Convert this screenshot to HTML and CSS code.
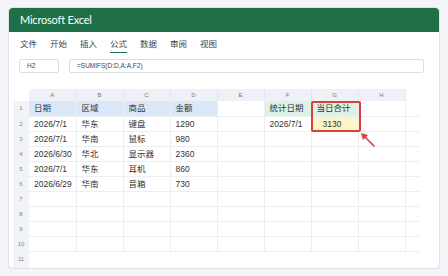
FILE: index.html
```html
<!DOCTYPE html>
<html lang="zh">
<head>
<meta charset="utf-8">
<link rel="stylesheet" href="styles.css">
</head>
<body>
<div class="card">
  <div class="titlebar">Microsoft Excel</div>
  <div class="tabs">
    <span class="tab">文件</span>
    <span class="tab">开始</span>
    <span class="tab">插入</span>
    <span class="tab active">公式</span>
    <span class="tab">数据</span>
    <span class="tab">审阅</span>
    <span class="tab">视图</span>
  </div>
  <div class="formulabar">
    <div class="namebox">H2</div>
    <div class="fx">=SUMIFS(D:D,A:A,F2)</div>
  </div>
  <div class="gridwrap">
    <table class="grid">
      <colgroup>
        <col class="c-rh"><col class="c"><col class="c"><col class="c"><col class="c"><col class="c"><col class="c"><col class="c"><col class="c"><col class="c-fill">
      </colgroup>
      <thead>
        <tr class="colhead"><th class="corner"></th><th>A</th><th>B</th><th>C</th><th>D</th><th>E</th><th>F</th><th>G</th><th>H</th><th class="fillh"></th></tr>
      </thead>
      <tbody>
        <tr><th class="rh">1</th><td class="hb">日期</td><td class="hb">区域</td><td class="hb">商品</td><td class="hb">金额</td><td></td><td class="hg">统计日期</td><td class="hg">当日合计</td><td></td><td class="fill"></td></tr>
        <tr><th class="rh">2</th><td>2026/7/1</td><td>华东</td><td>键盘</td><td>1290</td><td></td><td>2026/7/1</td><td class="res">3130</td><td></td><td class="fill"></td></tr>
        <tr><th class="rh">3</th><td>2026/7/1</td><td>华南</td><td>鼠标</td><td>980</td><td></td><td></td><td></td><td></td><td class="fill"></td></tr>
        <tr><th class="rh">4</th><td>2026/6/30</td><td>华北</td><td>显示器</td><td>2360</td><td></td><td></td><td></td><td></td><td class="fill"></td></tr>
        <tr><th class="rh">5</th><td>2026/7/1</td><td>华东</td><td>耳机</td><td>860</td><td></td><td></td><td></td><td></td><td class="fill"></td></tr>
        <tr><th class="rh">6</th><td>2026/6/29</td><td>华南</td><td>音箱</td><td>730</td><td></td><td></td><td></td><td></td><td class="fill"></td></tr>
        <tr><th class="rh">7</th><td></td><td></td><td></td><td></td><td></td><td></td><td></td><td></td><td class="fill"></td></tr>
        <tr><th class="rh">8</th><td></td><td></td><td></td><td></td><td></td><td></td><td></td><td></td><td class="fill"></td></tr>
        <tr><th class="rh">9</th><td></td><td></td><td></td><td></td><td></td><td></td><td></td><td></td><td class="fill"></td></tr>
        <tr><th class="rh">10</th><td></td><td></td><td></td><td></td><td></td><td></td><td></td><td></td><td class="fill"></td></tr>
        <tr class="last"><th class="rh">11</th><td></td><td></td><td></td><td></td><td></td><td></td><td></td><td></td><td class="fill"></td></tr>
      </tbody>
    </table>
    <div class="highlight"></div>
    <svg class="arrow" width="18" height="18" viewBox="0 0 18 18">
      <line x1="14" y1="15" x2="4" y2="5" stroke="#d9413a" stroke-width="1.6" stroke-linecap="round"/>
      <polygon points="1,2 8,4 3,9" fill="#d9413a"/>
    </svg>
  </div>
</div>
</body>
</html>
```

FILE: styles.css
```css
* { box-sizing: border-box; }
body {
  margin: 7px 8px 8px 8px;
  background: #f3f5f8;
  font-family: "Liberation Sans", "Noto Sans CJK SC", sans-serif;
  color: #333;
}
.card {
  background: #fff;
  border: 1px solid #e0e3e8;
  border-radius: 5px;
  overflow: hidden;
  height: 262px;
  box-shadow: 0 1px 2px rgba(0,0,0,0.06);
}
.titlebar {
  background: #1f7048;
  color: #fff;
  height: 24px;
  line-height: 24px;
  padding-left: 11px;
  font-family: "Lato", "Liberation Sans", sans-serif;
  font-size: 11px;
  letter-spacing: -0.2px;
}
.tabs {
  display: flex;
  gap: 13px;
  padding: 6px 11px 0 11px;
  font-size: 8.5px;
  color: #444;
}
.tab {
  display: block;
  line-height: 12px;
  padding-bottom: 2px;
  border-bottom: 1.5px solid transparent;
}
.tab.active {
  border-bottom-color: #1f7048;
}
.formulabar {
  display: flex;
  gap: 10px;
  padding: 6px 15px 0 10px;
}
.namebox, .fx {
  height: 14px;
  border: 1px solid #dcdfe4;
  border-radius: 2px;
  font-size: 6.5px;
  line-height: 12px;
  color: #444;
}
.namebox { width: 40px; padding-left: 7px; }
.fx { flex: 1; padding-left: 7px; }
.gridwrap {
  position: relative;
  margin: 16px 0 0 4px;
}
.grid {
  border-collapse: collapse;
  table-layout: fixed;
  width: 406px;
}
.c-rh { width: 16px; }
.c { width: 47px; }
.c-fill { width: 14px; }
.colhead th {
  height: 12px;
  background: #eef1f5;
  font-weight: normal;
  font-size: 6px;
  color: #777;
  padding: 0;
  text-align: center;
  border-right: 1px solid #e4e7eb;
}
.colhead th.corner { background: transparent; border-right: none; }
.colhead th.fillh { background: transparent; border-right: none; }
tbody tr { height: 15px; }
tbody td {
  padding: 0 0 0 5px;
  font-size: 8.5px;
  line-height: 14px;
  white-space: nowrap;
  border-right: 1px solid #eceef1;
  border-bottom: 1px solid #eceef1;
  color: #333;
}
tbody td.fill { border-right: none; }
.rh {
  background: #f1f3f7;
  font-weight: normal;
  font-size: 6px;
  color: #888;
  text-align: center;
  padding: 0;
  border-bottom: 1px solid #f1f3f7;
}
tr.last td { border: none; }
tr.last { height: 16px; }
td.hb { background: #dce8f7; }
td.hg { background: #ddf2e4; }
td.res { background: #fcf5c6; padding-left: 11px; }
.highlight {
  position: absolute;
  left: 298px;
  top: 12px;
  width: 50px;
  height: 31px;
  border: 2px solid #d9413a;
  border-radius: 2px;
}
.arrow {
  position: absolute;
  left: 347px;
  top: 42px;
}
```
